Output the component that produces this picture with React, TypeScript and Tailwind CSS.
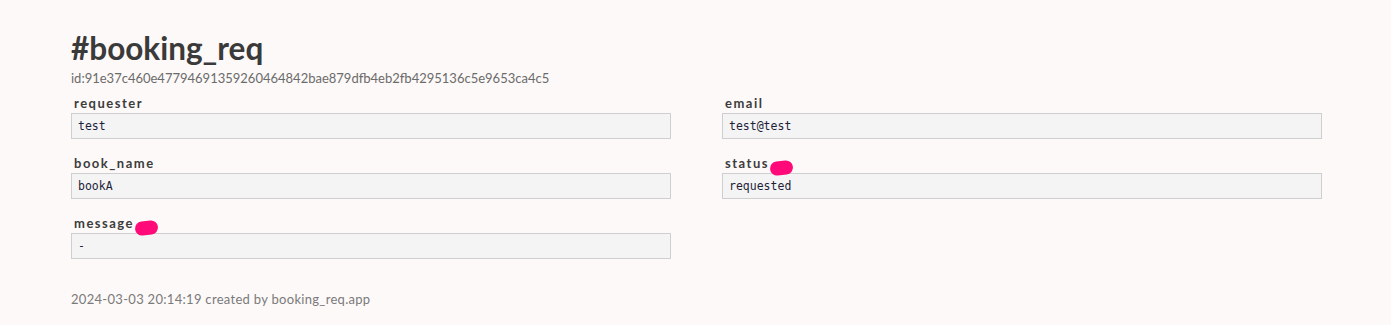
import React from "react";

const Field = ({ label, value, blob }: { label: string; value: string; blob?: boolean }) => (
  <div className="flex flex-col">
    <div className="relative h-[20px] pl-[3px] text-[13px] font-bold leading-[20px] tracking-[1.5px] text-[#3c3c3c]">
      <span className="relative">
        {label}
        {blob && (
          <span className="absolute left-[calc(100%+1px)] top-[6px] h-[14px] w-[23px] rounded-full bg-[#ff0a78] -rotate-6" />
        )}
      </span>
    </div>
    <div className="h-[26px] border border-[#cfcfcf] bg-[#f4f4f4] pl-[6px] font-['DejaVu_Sans_Mono',monospace] text-[11.5px] leading-[24px] text-[#1e1e3a]">
      {value}
    </div>
  </div>
);

export default function App() {
  return (
    <div className="min-h-screen bg-[#fdf9f8] font-['Lato',sans-serif]">
      <div className="px-[71px] pt-[29px]">
        <h1 className="text-[31.5px] font-bold leading-[38px] text-[#3a3a3a]">#booking_req</h1>
        <div className="mt-[2px] text-[13px] leading-[18px] text-[#6b6b6b]">
          id:91e37c460e47794691359260464842bae879dfb4eb2fb4295136c5e9653ca4c5
        </div>
        <div className="mt-[6px] grid w-[1251px] grid-cols-2 gap-x-[51px] gap-y-[14px]">
          <Field label="requester" value="test" />
          <Field label="email" value="test@test" />
          <Field label="book_name" value="bookA" />
          <Field label="status" value="requested" blob />
          <Field label="message" value="-" blob />
        </div>
        <div className="mt-[31px] text-[13px] leading-[18px] tracking-[0.3px] text-[#7a7a7a]">
          2024-03-03 20:14:19 created by booking_req.app
        </div>
      </div>
    </div>
  );
}
